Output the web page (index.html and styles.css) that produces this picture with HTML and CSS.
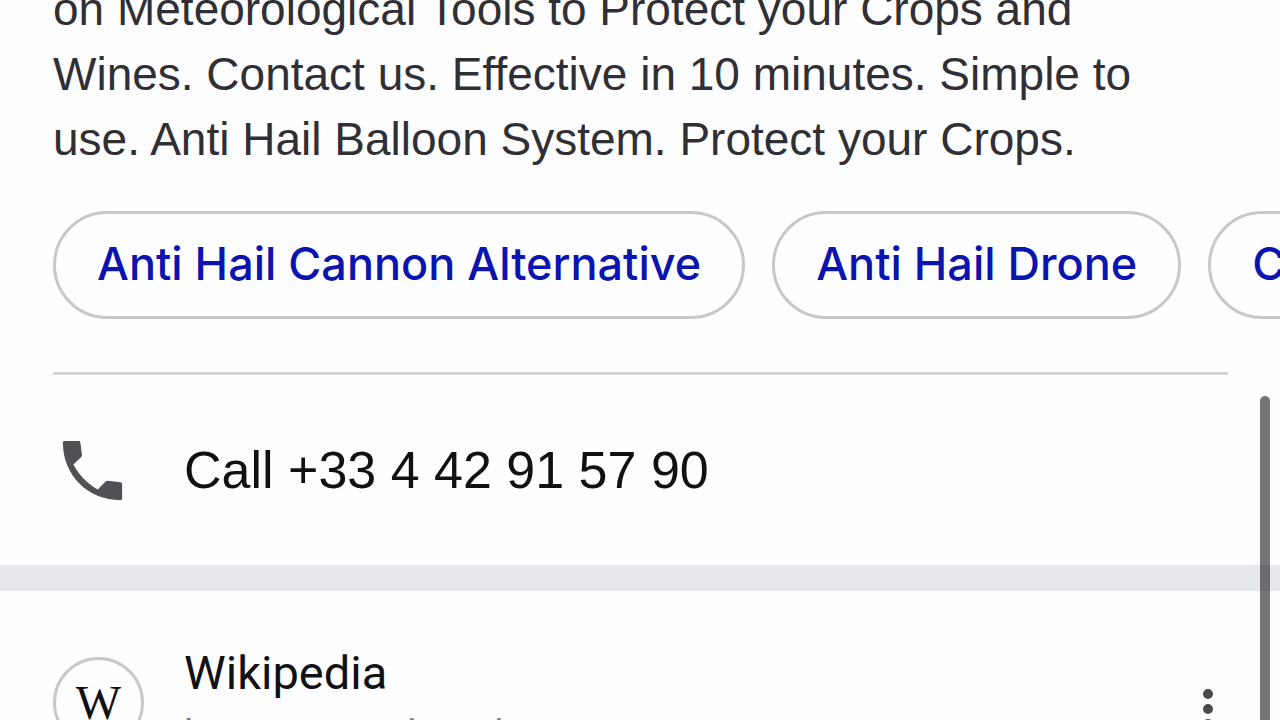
FILE: index.html
```html
<!DOCTYPE html>
<html lang="en">
<head>
    <title>Anti Hail - Search results</title>
    <meta charset="UTF-8">
    <meta name="viewport" content="width=device-width, initial-scale=1">
    <link rel="stylesheet" href="styles.css">
</head>
<body>
    <main class="results">
        <!-- Ad -->
        <article class="ad">
            <p class="description">on Meteorological Tools to Protect your Crops and Wines. Contact us. Effective in 10 minutes. Simple to use. Anti Hail Balloon System. Protect your Crops.</p>
            <nav class="chips">
                <a href="#" class="chip">Anti Hail Cannon Alternative</a>
                <a href="#" class="chip">Anti Hail Drone</a>
                <a href="#" class="chip">Contact Us</a>
            </nav>
            <a href="tel:+33442915790" class="call">
                <svg class="call-icon" viewBox="0 0 24 24" aria-hidden="true">
                    <path d="M3.500 3h4.300c.3 0 .5.200.5.500l.5 3.800c0 .3-.1.500-.3.700L6.200 10.200c1.700 3.200 4.200 5.800 7.400 7.600l2.300-2.400c.2-.2.400-.3.700-.3l3.900.5c.3 0 .5.300.5.600v4.300c0 .300-.2.500-.5.500C10.500 21 3 13.400 3 3.500c0-.3.200-.5.500-.5z"/>
                </svg>
                <span>Call +33 4 42 91 57 90</span>
            </a>
        </article>

        <!-- Wikipedia -->
        <article class="result">
            <div class="favicon">W</div>
            <div class="site">
                <div class="site-name">Wikipedia</div>
                <div class="site-url">https://en.wikipedia.org</div>
            </div>
            <button class="menu" aria-label="More options">
                <svg viewBox="0 0 12 42" aria-hidden="true">
                    <circle cx="6" cy="6" r="5"/>
                    <circle cx="6" cy="21" r="5"/>
                    <circle cx="6" cy="36" r="5"/>
                </svg>
            </button>
        </article>
    </main>
    <div class="scroll-thumb"></div>
</body>
</html>
```

FILE: styles.css
```css
body { margin: 0; height: 100vh; overflow: hidden; background: #fefdff; color: #111114; font-family: "Liberation Sans", Arial, sans-serif; }
.results { height: 100%; overflow: hidden; }
.ad { padding: 0 52px 0 53px; border-bottom: 26px solid #e7e8ec; }
.description { max-width: 1130px; margin: -23px 0 0; color: #303034; font-size: 46px; line-height: 65px; }
.chips { display: flex; gap: 27px; margin: 39px -52px 0 0; padding-bottom: 53px; overflow: hidden; }
.chip { flex: none; padding: 19px 41px 21px; border: 3px solid #c9c7cc; border-radius: 54px; color: #0b13b0; font: 500 45px/62px Inter, sans-serif; text-decoration: none; }
.call { display: flex; align-items: center; gap: 52px; height: 190px; border-top: 3px solid #d6d4d9; color: #111114; font-size: 52px; text-decoration: none; }
.call-icon { width: 79px; height: 79px; fill: #525054; }
.result { display: flex; align-items: flex-start; padding: 54px 52px 0 53px; }
.favicon { display: flex; align-items: center; justify-content: center; box-sizing: border-box; width: 91px; height: 91px; margin-top: 12px; border: 3px solid #c9c7cc; border-radius: 50%; font: 48px "Liberation Serif", serif; }
.site { flex: 1; margin-left: 40px; }
.site-name { font: 47px/56px Roboto, sans-serif; }
.site-url { margin-top: 11px; color: #77777c; font: 40px/48px Roboto, sans-serif; }
.menu { margin-top: 43px; padding: 0 14px; border: 0; background: none; }
.menu svg { display: block; width: 12px; height: 42px; fill: #4a484c; }
.scroll-thumb { position: absolute; top: 396px; right: 10px; bottom: -20px; width: 10px; border-radius: 5px; background: rgba(20, 18, 22, 0.58); }
```
